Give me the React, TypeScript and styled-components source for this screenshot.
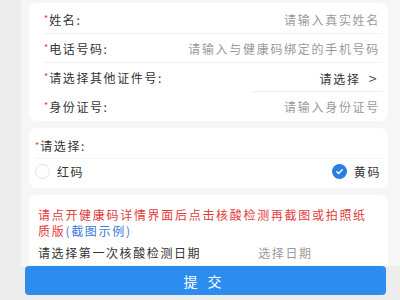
import React from 'react'
import styled, { createGlobalStyle } from 'styled-components'

const GlobalStyle = createGlobalStyle`
  html, body {
    margin: 0;
    padding: 0;
    background: #ededed;
    font-family: "Noto Sans CJK SC", "Noto Sans", sans-serif;
  }
`

const Page = styled.div`
  display: flex;
  width: 400px;
  height: 300px;
  overflow: hidden;
  background: linear-gradient(#f6f6f6, #f6f6f6) no-repeat 21px 0 / 379px 266px, #ededed;
`

const SideStrip = styled.div`
  width: 21px;
  flex-shrink: 0;
`

const Main = styled.div`
  flex: 1;
  display: flex;
  flex-direction: column;
  padding: 3px 12px 0 8px;
`

const Card = styled.div<{ $padLeft?: number; $gapAfter?: number; $flatBottom?: boolean }>`
  background: #fff;
  border-radius: ${(p) => (p.$flatBottom ? '8px 8px 0 0' : '8px')};
  padding: 0 5px 0 ${(p) => p.$padLeft ?? 8}px;
  margin-bottom: ${(p) => p.$gapAfter ?? 0}px;
`

const Row = styled.div<{ $lineFrom?: number; $last?: boolean }>`
  position: relative;
  display: flex;
  align-items: center;
  justify-content: space-between;
  height: 29px;
  padding-right: 3px;
  font-size: 12px;
  letter-spacing: 1.6px;
  &::after {
    content: '';
    display: ${(p) => (p.$last ? 'none' : 'block')};
    position: absolute;
    left: ${(p) => p.$lineFrom ?? 6}px;
    right: 0;
    bottom: 0;
    height: 1px;
    background: #f0f0f0;
  }
`

const Label = styled.span`
  color: #333;
  white-space: nowrap;
`

const Star = styled.span`
  color: #e23b3b;
  font-size: 9px;
  vertical-align: 3px;
  letter-spacing: 0;
  margin-right: 1px;
`

const Placeholder = styled.span<{ $dark?: boolean }>`
  color: ${(p) => (p.$dark ? '#333' : '#9a9a9a')};
  font-size: 12px;
  letter-spacing: 1.7px;
  white-space: nowrap;
`

const Chevron = styled.span`
  color: #444;
  font-size: 14px;
  margin-left: 8px;
  margin-right: 2px;
`

const Title = styled.div`
  height: 26px;
  display: flex;
  align-items: center;
  padding-top: 4px;
  font-size: 12px;
  letter-spacing: 1.6px;
  color: #333;
  border-bottom: 1px solid #f3f3f3;
`

const RadioRow = styled.div`
  display: flex;
  align-items: center;
  justify-content: space-between;
  height: 25px;
  font-size: 12px;
  letter-spacing: 1.6px;
  color: #333;
  padding-right: 2px;
  padding-bottom: 4px;
`

const RadioItem = styled.div`
  display: flex;
  align-items: center;
  gap: 7px;
`

const Circle = styled.span<{ $checked?: boolean }>`
  width: 15px;
  height: 15px;
  border-radius: 50%;
  box-sizing: border-box;
  border: ${(p) => (p.$checked ? 'none' : '1px solid #e2e2e2')};
  background: ${(p) => (p.$checked ? '#2a7de1' : '#fff')};
  display: flex;
  align-items: center;
  justify-content: center;
`

const Notice = styled.div`
  padding-top: 12px;
  font-size: 12px;
  line-height: 16px;
  letter-spacing: 1.7px;
  color: #e23b3b;
  padding-right: 14px;
`

const LinkText = styled.span`
  color: #3b79d8;
`

const DateRow = styled.div`
  display: flex;
  align-items: center;
  height: 26px;
  font-size: 12px;
  letter-spacing: 1.6px;
  color: #333;
  gap: 57px;
`

const DateHint = styled.span`
  color: #9a9a9a;
`

const SubmitButton = styled.button`
  margin-left: -4px;
  width: 361px;
  height: 29px;
  border: none;
  border-radius: 4px;
  background: #2d8cf0;
  color: #fff;
  font-family: "Noto Sans CJK SC", "Noto Sans", sans-serif;
  font-size: 14px;
  letter-spacing: 10px;
  padding-left: 10px;
`

const App: React.FC = () => {
  return (
    <>
      <GlobalStyle />
      <Page>
        <SideStrip />
        <Main>
          <Card $padLeft={15} $gapAfter={7}>
            <Row $lineFrom={0} style={{ marginTop: 2 }}>
              <Label><Star>*</Star>姓名:</Label>
              <Placeholder>请输入真实姓名</Placeholder>
            </Row>
            <Row $lineFrom={0}>
              <Label><Star>*</Star>电话号码:</Label>
              <Placeholder>请输入与健康码绑定的手机号码</Placeholder>
            </Row>
            <Row $lineFrom={208}>
              <Label><Star>*</Star>请选择其他证件号:</Label>
              <span>
                <Placeholder $dark>请选择</Placeholder>
                <Chevron>&gt;</Chevron>
              </span>
            </Row>
            <Row $last>
              <Label><Star>*</Star>身份证号:</Label>
              <Placeholder>请输入身份证号</Placeholder>
            </Row>
          </Card>
          <Card $padLeft={6} $gapAfter={7}>
            <Title><Star>*</Star>请选择:</Title>
            <RadioRow>
              <RadioItem>
                <Circle />
                红码
              </RadioItem>
              <RadioItem>
                <Circle $checked>
                  <svg width="9" height="9" viewBox="0 0 10 10">
                    <path d="M2 5.2l2 2 4-4.2" stroke="#fff" strokeWidth="1.5" fill="none" strokeLinecap="round" strokeLinejoin="round" />
                  </svg>
                </Circle>
                黄码
              </RadioItem>
            </RadioRow>
          </Card>
          <Card $padLeft={9} $gapAfter={1} $flatBottom>
            <Notice>
              请点开健康码详情界面后点击核酸检测再截图或拍照纸质版<LinkText>(截图示例)</LinkText>
            </Notice>
            <DateRow>
              <span>请选择第一次核酸检测日期</span>
              <DateHint>选择日期</DateHint>
            </DateRow>
          </Card>
          <SubmitButton>提交</SubmitButton>
        </Main>
      </Page>
    </>
  )
}

export default App
